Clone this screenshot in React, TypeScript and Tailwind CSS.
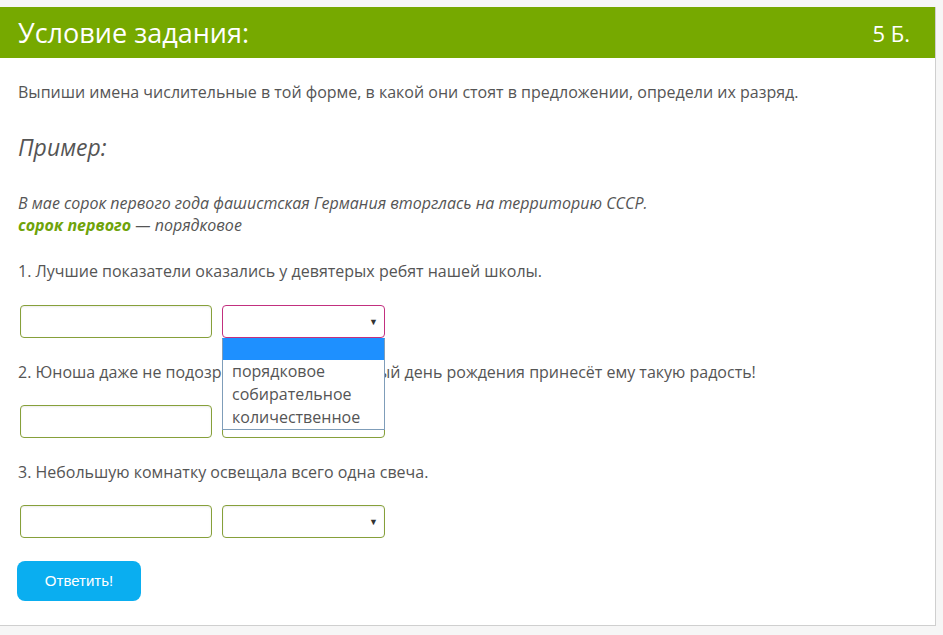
const font = { fontFamily: '"Open Sans", "Liberation Sans", sans-serif' }

const questions = [
  { n: 1, text: 'Лучшие показатели оказались у девятерых ребят нашей школы.', focused: true },
  { n: 2, text: 'Юноша даже не подозревал, что пятнадцатый день рождения принесёт ему такую радость!', focused: false },
  { n: 3, text: 'Небольшую комнатку освещала всего одна свеча.', focused: false },
]

const options = ['порядковое', 'собирательное', 'количественное']

function Select({ focused }: { focused: boolean }) {
  return (
    <div className="relative">
      <div
        className={
          focused
            ? 'flex h-[33px] w-[163px] items-center justify-end rounded-[4px] border border-[#c2307f] bg-white pr-[6px]'
            : 'flex h-[33px] w-[163px] items-center justify-end rounded-[4px] border border-[#86a03a] bg-white pr-[6px] shadow-[inset_0_1px_2px_rgba(0,0,0,0.08)]'
        }
      >
        <span className="text-[9px] leading-none text-[#333]">▼</span>
      </div>
      {focused && (
        <div className="absolute left-0 top-[33px] z-10 w-[163px] border border-[#7f9db9] border-t-[#1e90ff] bg-white">
          <div className="h-[21px] bg-[#1e90ff]" />
          {options.map((o) => (
            <div key={o} className="px-[9px] text-[16px] leading-[23px] text-[#555]">
              {o}
            </div>
          ))}
        </div>
      )}
    </div>
  )
}

export default function App() {
  return (
    <div className="min-h-[635px] bg-[#f6f6f6] pt-[7px]" style={font}>
      <div className="w-[936px] border-r border-b border-[#cfcfcf] bg-white pb-[24px]">
        <div className="flex h-[51px] items-center justify-between bg-[#76a900] pl-[18px] pr-[25px] text-white">
          <h1 className="text-[27px] leading-none">Условие задания:</h1>
          <span className="text-[22px] leading-none">5 Б.</span>
        </div>

        <div className="px-[18px] text-[#555]">
          <p className="mt-[23px] text-[16px] leading-[22px]">
            Выпиши имена числительные в той форме, в какой они стоят в предложении, определи их разряд.
          </p>

          <h2 className="mt-[28px] text-[23px] italic leading-[32px]">Пример:</h2>

          <div className="mt-[29px] text-[16px] italic leading-[22px]">
            <p className="leading-[22px]">В мае сорок первого года фашистская Германия вторглась на территорию СССР.</p>
            <p className="leading-[22px]">
              <span className="font-bold text-[#6fa30a]">сорок первого</span> — порядковое
            </p>
          </div>

          {questions.map((q, i) => (
            <div key={q.n} className={i === 0 ? 'mt-[24px]' : 'mt-[23px]'}>
              <p className="text-[16px] leading-[22px]">
                {q.n}. {q.text}
              </p>
              <div className={i === 0 ? 'mt-[23px] flex gap-[10px] pl-[2px]' : 'mt-[22px] flex gap-[10px] pl-[2px]'}>
                <input
                  className="h-[33px] w-[192px] rounded-[4px] border border-[#86a03a] bg-white shadow-[inset_0_1px_2px_rgba(0,0,0,0.08)] outline-none"
                  aria-label={`Числительное ${q.n}`}
                />
                <Select focused={q.focused} />
              </div>
            </div>
          ))}

          <button
            className="-ml-[1px] mt-[23px] h-[40px] w-[124px] rounded-[8px] bg-[#0aaef0] text-[15px] text-white"
            style={{ fontFamily: '"Liberation Sans", Arial, sans-serif' }}
          >
            Ответить!
          </button>
        </div>
      </div>
    </div>
  )
}
